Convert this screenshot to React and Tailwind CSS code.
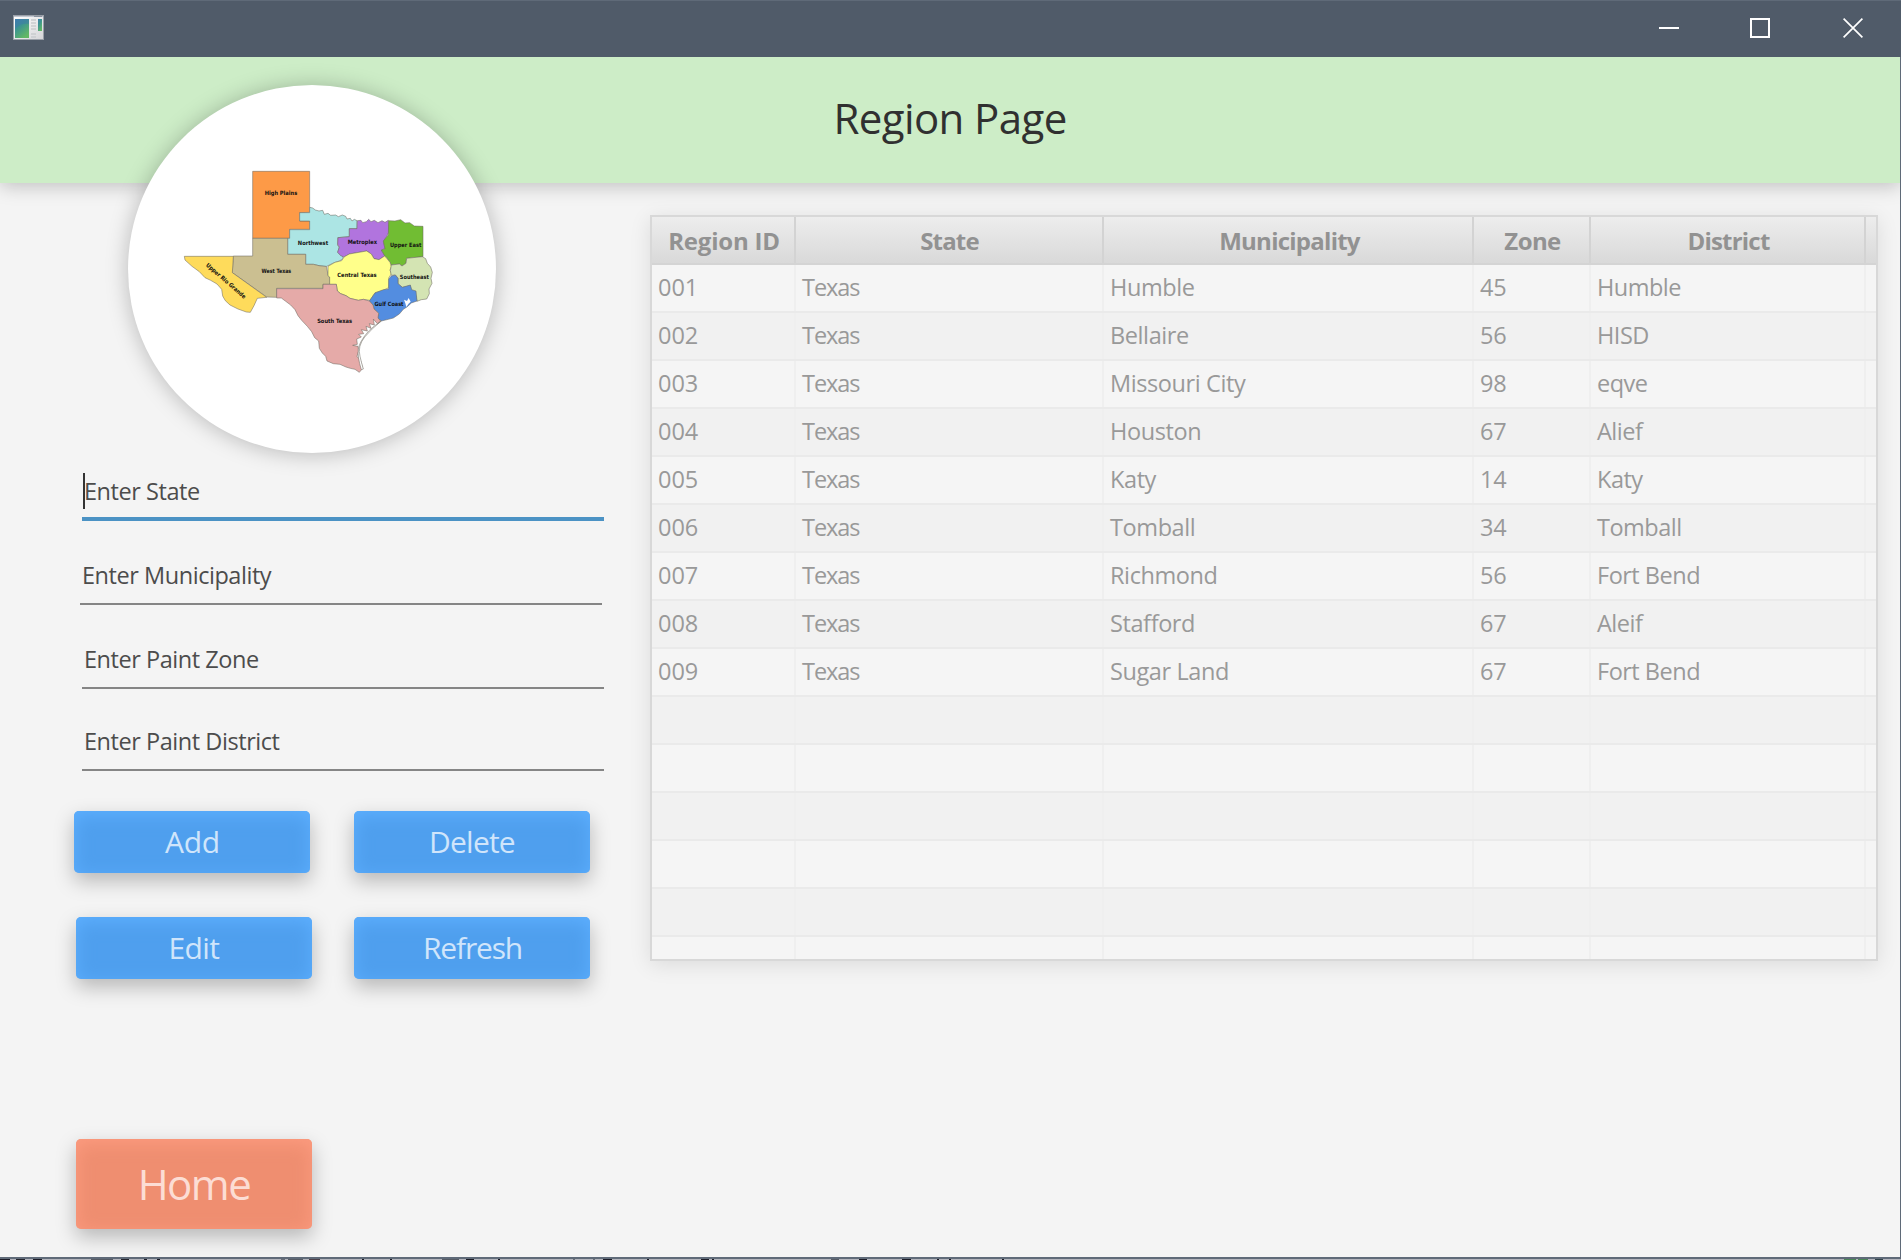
import clsx from "clsx";

const COLUMNS = [
  { key: "id", label: "Region ID", width: "w-[144px]", head: "tracking-[-0.2px] pl-[2px]", cell: "tracking-[0px]" },
  { key: "state", label: "State", width: "w-[308px]", head: "tracking-[-0.8px] pl-[1px]", cell: "tracking-[-1.05px]" },
  { key: "municipality", label: "Municipality", width: "w-[370px]", head: "tracking-[-0.75px] pl-[3px]", cell: "tracking-[-0.4px]" },
  { key: "zone", label: "Zone", width: "w-[117px]", head: "tracking-[-0.6px] pl-[2px]", cell: "tracking-[-0.1px]" },
  { key: "district", label: "District", width: "w-[275px]", head: "tracking-[-0.8px] pl-[2px]", cell: "tracking-[-0.5px]" },
];

const ROWS = [
  { id: "001", state: "Texas", municipality: "Humble", zone: "45", district: "Humble" },
  { id: "002", state: "Texas", municipality: "Bellaire", zone: "56", district: "HISD" },
  { id: "003", state: "Texas", municipality: "Missouri City", zone: "98", district: "eqve" },
  { id: "004", state: "Texas", municipality: "Houston", zone: "67", district: "Alief" },
  { id: "005", state: "Texas", municipality: "Katy", zone: "14", district: "Katy" },
  { id: "006", state: "Texas", municipality: "Tomball", zone: "34", district: "Tomball" },
  { id: "007", state: "Texas", municipality: "Richmond", zone: "56", district: "Fort Bend" },
  { id: "008", state: "Texas", municipality: "Stafford", zone: "67", district: "Aleif" },
  { id: "009", state: "Texas", municipality: "Sugar Land", zone: "67", district: "Fort Bend" },
  {}, {}, {}, {}, {}, {},
];

function AppIcon() {
  return (
    <svg width="31" height="25" viewBox="0 0 31 25">
      <defs>
        <linearGradient id="pane" x1="0" y1="0" x2="0.6" y2="1">
          <stop offset="0" stopColor="#3f7fb0" />
          <stop offset="0.45" stopColor="#3d9590" />
          <stop offset="1" stopColor="#62b865" />
        </linearGradient>
        <linearGradient id="frame" x1="0" y1="0" x2="1" y2="1">
          <stop offset="0" stopColor="#ffffff" />
          <stop offset="1" stopColor="#d5d5d8" />
        </linearGradient>
      </defs>
      <rect x="0.5" y="0.5" width="30" height="24" fill="url(#frame)" stroke="#9aa0a8" />
      <path d="M1 1.5H30" stroke="#c3c8d2" />
      <path d="M21 1.5H29" stroke="#8a93a0" />
      <rect x="2" y="4" width="14" height="19" fill="url(#pane)" />
      <path d="M2 14C6 9 11 8 16 9V4H2Z" fill="#3d78ae" opacity="0.45" />
      <path d="M18 5H23M18 8H23M18 11H23M18 14H23M18 19H23M18 22H23" stroke="#c9cbce" strokeWidth="1.6" />
      <rect x="25" y="4" width="4" height="12" fill="url(#pane)" />
    </svg>
  );
}

function TitleBar() {
  return (
    <div className="flex h-[57px] shrink-0 items-center border-t border-[#5f6a78] bg-[#505b69] pr-[38px] pl-[13px]">
      <div className="mb-[3px]">
        <AppIcon />
      </div>
      <div className="mb-[2px] ml-auto flex items-center text-white">
        <svg width="20" height="20" viewBox="0 0 20 20" stroke="currentColor" strokeWidth="2">
          <path d="M0 10H20" />
        </svg>
        <svg className="ml-[71px]" width="20" height="20" viewBox="0 0 20 20" fill="none" stroke="currentColor" strokeWidth="2">
          <rect x="1" y="1" width="18" height="18" />
        </svg>
        <svg className="ml-[73px]" width="20" height="20" viewBox="0 0 20 20" stroke="currentColor" strokeWidth="1.7">
          <path d="M0.6 0.6L19.4 19.4M19.4 0.6L0.6 19.4" />
        </svg>
      </div>
    </div>
  );
}

const REGIONS = [
  { fill: "#fd9a47", d: "M248 49H419V172L389 173V198H419V223H359V250H248Z" },
  { fill: "#ace5e4", d: "M419 157L428 159L436 165L447 168L458 166L463 178L474 175L482 181L497 180L505 185L517 180L527 184L531 192L541 190L546 198L553 193L561 197V221H538V245L503 248V272L508 276L503 292L518 304L520 311L508 318L490 324L470 334L447 332L430 328H407V298H353V250H359V224H419V198H389V173H419Z" },
  { fill: "#b174de", d: "M562 197L573 196L578 203L589 200L596 193L603 200L613 196L624 203L636 197L645 202L655 196L656 232L650 245L640 258L645 280L634 285L644 302L627 314L612 311L604 297L590 288L555 294L538 297L522 306L512 302L503 292L508 276L503 268L504 248L538 245V221H561Z" },
  { fill: "#71bd33", d: "M656 197L675 198L692 194L705 204L719 203L733 213L759 214V305L710 310L708 325L696 333L688 327L664 330L657 318L650 308L644 302L634 285L645 282L640 258L655 240Z" },
  { fill: "#cbbf91", d: "M248 250H353V298H407V328H430L447 332L470 335L474 362L479 366V388H459V400H320V427L290 426L187 353L190 303H248Z" },
  { fill: "#fedb5b", d: "M43 304H190L187 353L290 427L262 430L252 452L241 472L229 471L204 462L180 450L166 437L158 423L155 403L141 387L122 376L105 368L88 350L66 334L45 315Z" },
  { fill: "#ffff8a", d: "M474 334L495 322L515 317L522 306L538 297L555 294L590 288L604 297L612 311L627 314L644 303L650 310L660 322L664 335L660 345L664 357L657 367L656 398L640 406L615 413L600 436L580 433L565 436L540 430L528 422L512 416L502 408L499 388H479V366L474 362Z" },
  { fill: "#d4e4b3", d: "M664 330L688 327L696 333L708 325L710 310L757 305L767 311L772 325L782 336L787 352L783 370L786 385L777 402L778 416L770 432L754 434L741 439L738 422L725 414L721 392L697 397L684 386V369L676 360L664 361L661 347Z" },
  { fill: "#538de0", d: "M664 363L676 360L684 370V386L697 397L721 390L725 404L738 408L741 438L724 444L712 455L700 463L688 477L670 489L655 493L634 498L622 488L626 475L612 462L609 450L598 438L615 414L640 404L656 402V372Z" },
  { fill: "#e5aaa8", d: "M320 401H459V388H499L502 408L512 416L528 422L540 430L565 436L580 433L598 438L609 450L612 462L626 475L624 489L632 498L622 506L610 492L613 510L598 506L603 520L588 514L592 528L574 524L581 536L566 538L574 546L560 552L562 568L548 571L564 574L566 588L561 604L572 618L578 640L568 652L555 643L541 640L528 636L510 628L490 626L471 618L467 604L457 594L448 580L446 558L434 548L425 530L412 514L395 496L384 482L375 464L362 450L346 438L334 429H320Z" },
];

const REGION_LABELS = [
  { x: 333, y: 119, width: 97, text: "High Plains" },
  { x: 429, y: 269, width: 91, text: "Northwest" },
  { x: 577, y: 268, width: 88, text: "Metroplex" },
  { x: 707, y: 275, width: 94, text: "Upper East" },
  { x: 319, y: 354, width: 89, text: "West Texas" },
  { x: 561, y: 365, width: 118, text: "Central Texas" },
  { x: 733, y: 372, width: 87, text: "Southeast" },
  { x: 657, y: 452, width: 87, text: "Gulf Coast" },
  { x: 494, y: 503, width: 105, text: "South Texas" },
];

function TexasMap() {
  return (
    <svg width="280" height="230" viewBox="6 -3 840 690" fontFamily='"DejaVu Sans", sans-serif' fontWeight="700" fontSize="17.5" textAnchor="middle" fill="#111">
      <g stroke="#6b675e" strokeWidth="1.6" strokeLinejoin="round">
        {REGIONS.map((r) => (
          <path key={r.fill} d={r.d} fill={r.fill} />
        ))}
      </g>
      <path d="M634 498Q606 520 584 546Q562 574 570 604Q574 622 580 642L574 644Q562 606 565 582Q568 560 596 528Q612 512 634 498Z" fill="#fff" stroke="#6b675e" strokeWidth="1.6" />
      <path d="M702 434L711 438L716 429L722 440L715 447L709 456L706 445Z" fill="#fff" />
      {REGION_LABELS.map((l) => (
        <text key={l.text} x={l.x} y={l.y} textLength={l.width} lengthAdjust="spacingAndGlyphs">
          {l.text}
        </text>
      ))}
      <text transform="translate(164 382) rotate(41)" textLength="152" lengthAdjust="spacingAndGlyphs">
        Upper Rio Grande
      </text>
    </svg>
  );
}

function Field({ label, focused, className }) {
  return (
    <div
      className={clsx(
        "flex h-[60px] w-[522px] items-center pl-[2px] text-[23.5px] text-[#4c4c4c]",
        focused ? "shadow-[inset_0_-4px_#4b92c4]" : "shadow-[inset_0_-2px_#858585]",
        className,
      )}
    >
      {focused && <span className="-ml-px -mr-px h-[36px] w-[2px] bg-[#333]" />}
      <span className="leading-[32px] tracking-[-0.45px]">{label}</span>
    </div>
  );
}

function ActionButton({ children, className, home }) {
  return (
    <button
      className={clsx(
        "flex w-[236px] items-center justify-center rounded-[5px]",
        home
          ? "h-[90px] bg-[#ef8e70] pb-[2px] text-[42px] font-[370] tracking-[-1.5px] text-[#fcddd4] shadow-[inset_0_4px_18px_#fd9c80,0_8px_20px_rgba(0,0,0,0.25)]"
          : "h-[62px] bg-[#4f9fee] pb-[2px] text-[30px] font-[380] text-[#d0e5fb] shadow-[inset_0_4px_18px_#5eb0ff,0_8px_20px_rgba(0,0,0,0.25)]",
        className,
      )}
    >
      {children}
    </button>
  );
}

function RegionTable() {
  return (
    <div className="h-[746px] w-[1228px] overflow-hidden border-2 border-[#d8d8d8] shadow-[0_4px_20px_rgba(0,0,0,0.1)]">
      <div className="flex h-[48px] border-b-2 border-[#d4d4d4] bg-linear-to-b from-[#ededed] to-[#d9d9d9]">
        {COLUMNS.map((c) => (
          <div key={c.key} className={clsx("flex shrink-0 items-center justify-center border-r-2 border-[#d3d3d3] pt-[2px] text-[24px] font-bold text-[#929292]", c.width, c.head)}>
            {c.label}
          </div>
        ))}
      </div>
      {ROWS.map((row, i) => (
        <div key={i} className={clsx("flex h-[48px] border-b-2 border-[#eaeaea]", i % 2 ? "bg-[#f1f1f1]" : "bg-[#f5f5f5]")}>
          {COLUMNS.map((c) => (
            <div key={c.key} className={clsx("flex shrink-0 items-center border-r-2 border-[#efefef] pl-[6px] text-[23.5px] text-[#999]", c.width, c.cell)}>
              {row[c.key]}
            </div>
          ))}
        </div>
      ))}
    </div>
  );
}

// Start and width of each mark in the strip below the window frame.
const MARKS = [
  [0, 10, "#1b1b26"], [16, 9, "#23232c"], [33, 9, "#1b1b26"], [91, 22, "#555a64"], [121, 8, "#23232c"],
  [144, 3, "#1b1b26"], [157, 3, "#1b1b26"], [281, 4, "#666b75"], [288, 15, "#555a64"], [309, 11, "#4b3f48"],
  [362, 2, "#1b1b26"], [390, 2, "#1b1b26"], [442, 17, "#555a64"], [466, 8, "#1b1b26"], [498, 2, "#1b1b26"],
  [573, 2, "#666b75"], [593, 2, "#666b75"], [603, 9, "#1b1b26"], [647, 2, "#1b1b26"], [701, 8, "#1b1b26"],
  [712, 2, "#1b1b26"], [831, 8, "#555a64"], [859, 8, "#1b1b26"], [902, 9, "#1b1b26"], [937, 2, "#1b1b26"],
  [949, 2, "#1b1b26"], [1002, 2, "#1b1b26"], [1844, 12, "#4a8557"], [1858, 10, "#4a8557"], [1875, 8, "#31424a"],
];

function DesktopStrip() {
  return (
    <div className="flex h-px shrink-0 bg-[#b4b5bd]">
      {MARKS.map(([start, width, color], i) => {
        const previousEnd = i ? MARKS[i - 1][0] + MARKS[i - 1][1] : 0;
        return <span key={start} className="h-px shrink-0" style={{ marginLeft: start - previousEnd, width, background: color }} />;
      })}
    </div>
  );
}

export default function App() {
  return (
    <div className="flex h-[1260px] w-[1901px] flex-col overflow-hidden bg-[#f4f4f4] font-['Open_Sans','Noto_Sans',sans-serif]">
      <TitleBar />
      <div className="flex flex-1 flex-col overflow-hidden border-r border-b-2 border-r-[#5f6a78] border-b-[#5f6a78]">
        <header className="flex h-[126px] shrink-0 items-center justify-center bg-[#cdedc7] pb-[5px] shadow-[0_3px_18px_rgba(0,0,0,0.22)]">
          <h1 className="text-[42px] font-[370] tracking-[-0.6px] text-[#303030]">Region Page</h1>
        </header>
        <main className="flex">
          <section className="w-[650px] shrink-0">
            <div className="relative -mt-[98px] ml-[128px] flex h-[368px] w-[368px] items-center justify-center rounded-full bg-white shadow-[0_1px_22px_rgba(0,0,0,0.25)]">
              <TexasMap />
            </div>
            <Field label="Enter State" focused className="mt-[8px] ml-[82px]" />
            <Field label="Enter Municipality" className="mt-[24px] ml-[80px]" />
            <Field label="Enter Paint Zone" className="mt-[24px] ml-[82px]" />
            <Field label="Enter Paint District" className="mt-[22px] ml-[82px]" />
            <div className="mt-[40px] ml-[74px] flex gap-[44px]">
              <ActionButton className="pl-px tracking-[-0.3px]">Add</ActionButton>
              <ActionButton className="tracking-[-0.8px]">Delete</ActionButton>
            </div>
            <div className="mt-[44px] ml-[76px] flex gap-[42px]">
              <ActionButton className="tracking-[-0.6px]">Edit</ActionButton>
              <ActionButton className="pl-px tracking-[-1.15px]">Refresh</ActionButton>
            </div>
            <ActionButton home className="mt-[160px] ml-[76px]">Home</ActionButton>
          </section>
          <section className="pt-[32px]">
            <RegionTable />
          </section>
        </main>
      </div>
      <DesktopStrip />
    </div>
  );
}
